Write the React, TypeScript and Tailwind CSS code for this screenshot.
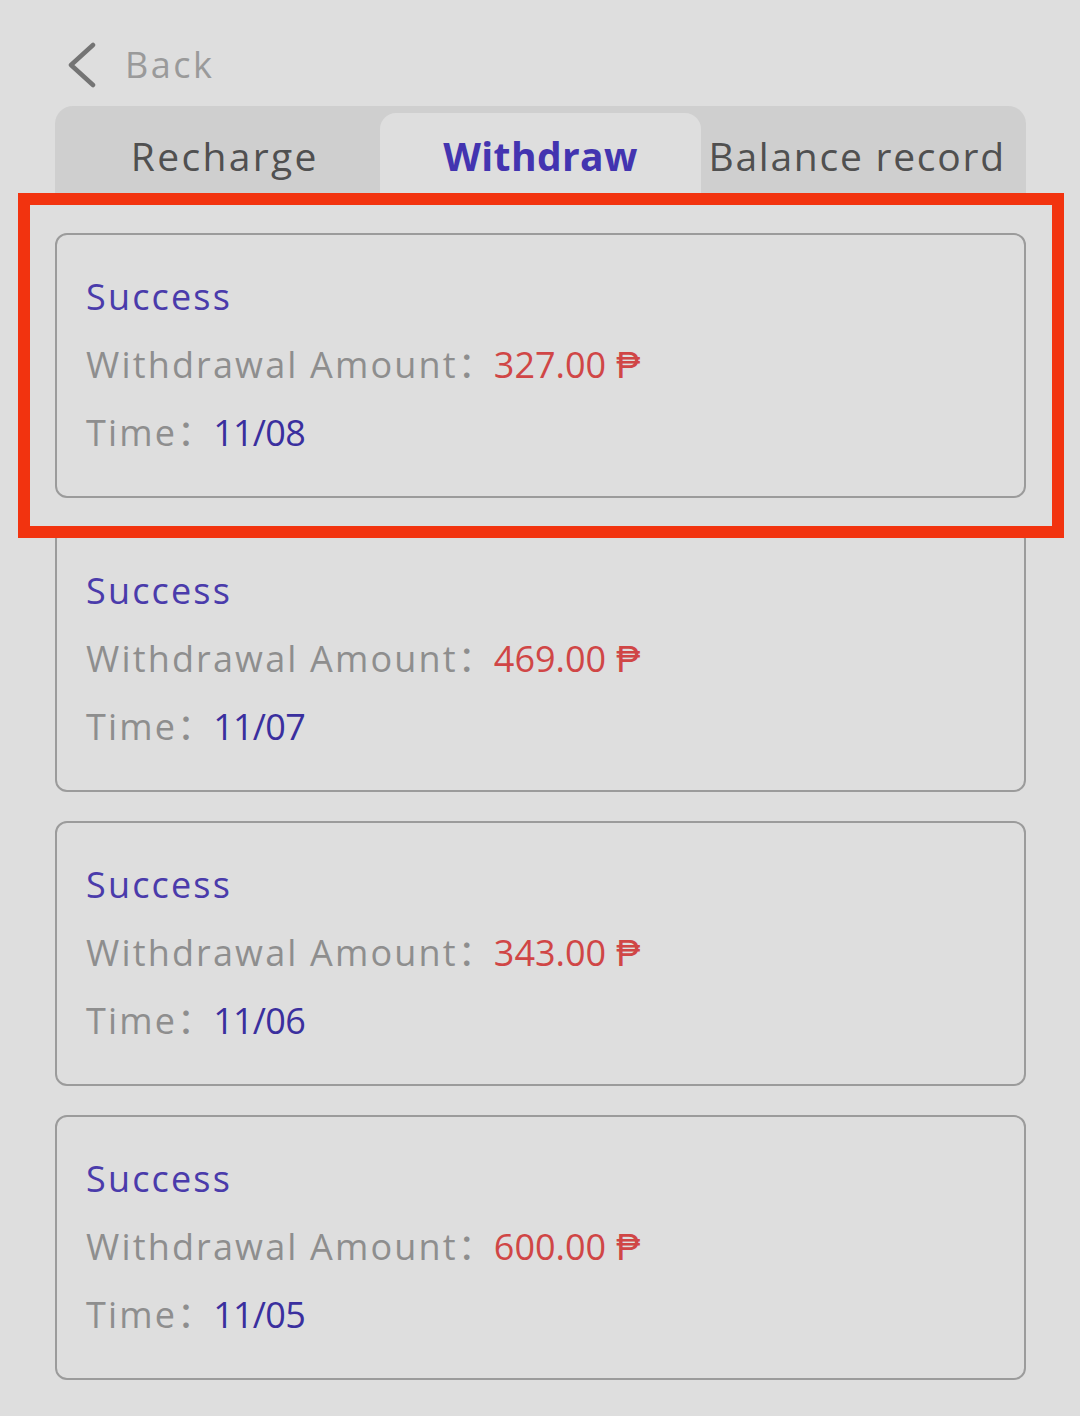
import React from "react";

const records = [
  { amount: "327.00", time: "11/08" },
  { amount: "469.00", time: "11/07" },
  { amount: "343.00", time: "11/06" },
  { amount: "600.00", time: "11/05" },
];

export default function App() {
  return (
    <div className="relative w-[1080px] min-h-[1416px] bg-[#dedede] font-['Open_Sans','Noto_Sans_CJK_SC',sans-serif] overflow-hidden">
      {/* Header */}
      <div className="mt-[34px] h-[62px] flex items-center pl-[66px]">
        <svg width="32" height="46" viewBox="0 0 32 46" className="shrink-0">
          <polyline points="27,3 5,23 27,43" fill="none" stroke="#747474" strokeWidth="4.5" strokeLinecap="round" strokeLinejoin="round" />
        </svg>
        <span className="ml-[27px] text-[36px] leading-none text-[#9a9a9a] tracking-[0.07em]">Back</span>
      </div>

      {/* Tabs */}
      <div className="mt-[10px] ml-[55px] w-[971px] h-[93px] bg-[#cfcfcf] rounded-t-[18px] grid grid-cols-3 px-[3px] pt-[7px]">
        <div className="flex items-center justify-center pl-[12px] text-[39px] text-[#505050] tracking-[0.06em]">Recharge</div>
        <div className="flex items-center justify-center bg-[#dedede] rounded-t-[16px] text-[39px] font-bold text-[#4334b0] tracking-[0.01em]">Withdraw</div>
        <div className="flex items-center justify-center pr-[10px] text-[39px] text-[#505050] tracking-[0.045em] whitespace-nowrap">Balance record</div>
      </div>

      {/* Cards */}
      <div className="mt-[34px] ml-[55px] w-[971px] flex flex-col gap-[29px]">
        {records.map((r, i) => (
          <div key={i} className="h-[265px] border-2 border-[#9b9b9b] rounded-[12px] pl-[29px] pt-[28px]">
            <div className="text-[36px] leading-[68px] text-[#4a3bab] tracking-[0.06em]">Success</div>
            <div className="text-[36px] leading-[68px] whitespace-nowrap">
              <span className="text-[#8e8e8e] tracking-[0.06em]">Withdrawal Amount</span>
              <span className="text-[#8e8e8e] leading-none font-['Noto_Sans_CJK_SC',sans-serif]">：</span>
              <span className="text-[#d04646]">{r.amount}<span className="ml-[10px]">₱</span></span>
            </div>
            <div className="text-[36px] leading-[68px] whitespace-nowrap">
              <span className="text-[#8e8e8e] tracking-[0.06em]">Time</span>
              <span className="text-[#8e8e8e] leading-none font-['Noto_Sans_CJK_SC',sans-serif]">：</span>
              <span className="text-[#3a2f9e] tracking-[-0.02em]">{r.time}</span>
            </div>
          </div>
        ))}
      </div>

      {/* Annotation box */}
      <div className="absolute left-[18px] top-[193px] w-[1046px] h-[345px] border-[12px] border-[#f2330f] pointer-events-none" />
    </div>
  );
}
